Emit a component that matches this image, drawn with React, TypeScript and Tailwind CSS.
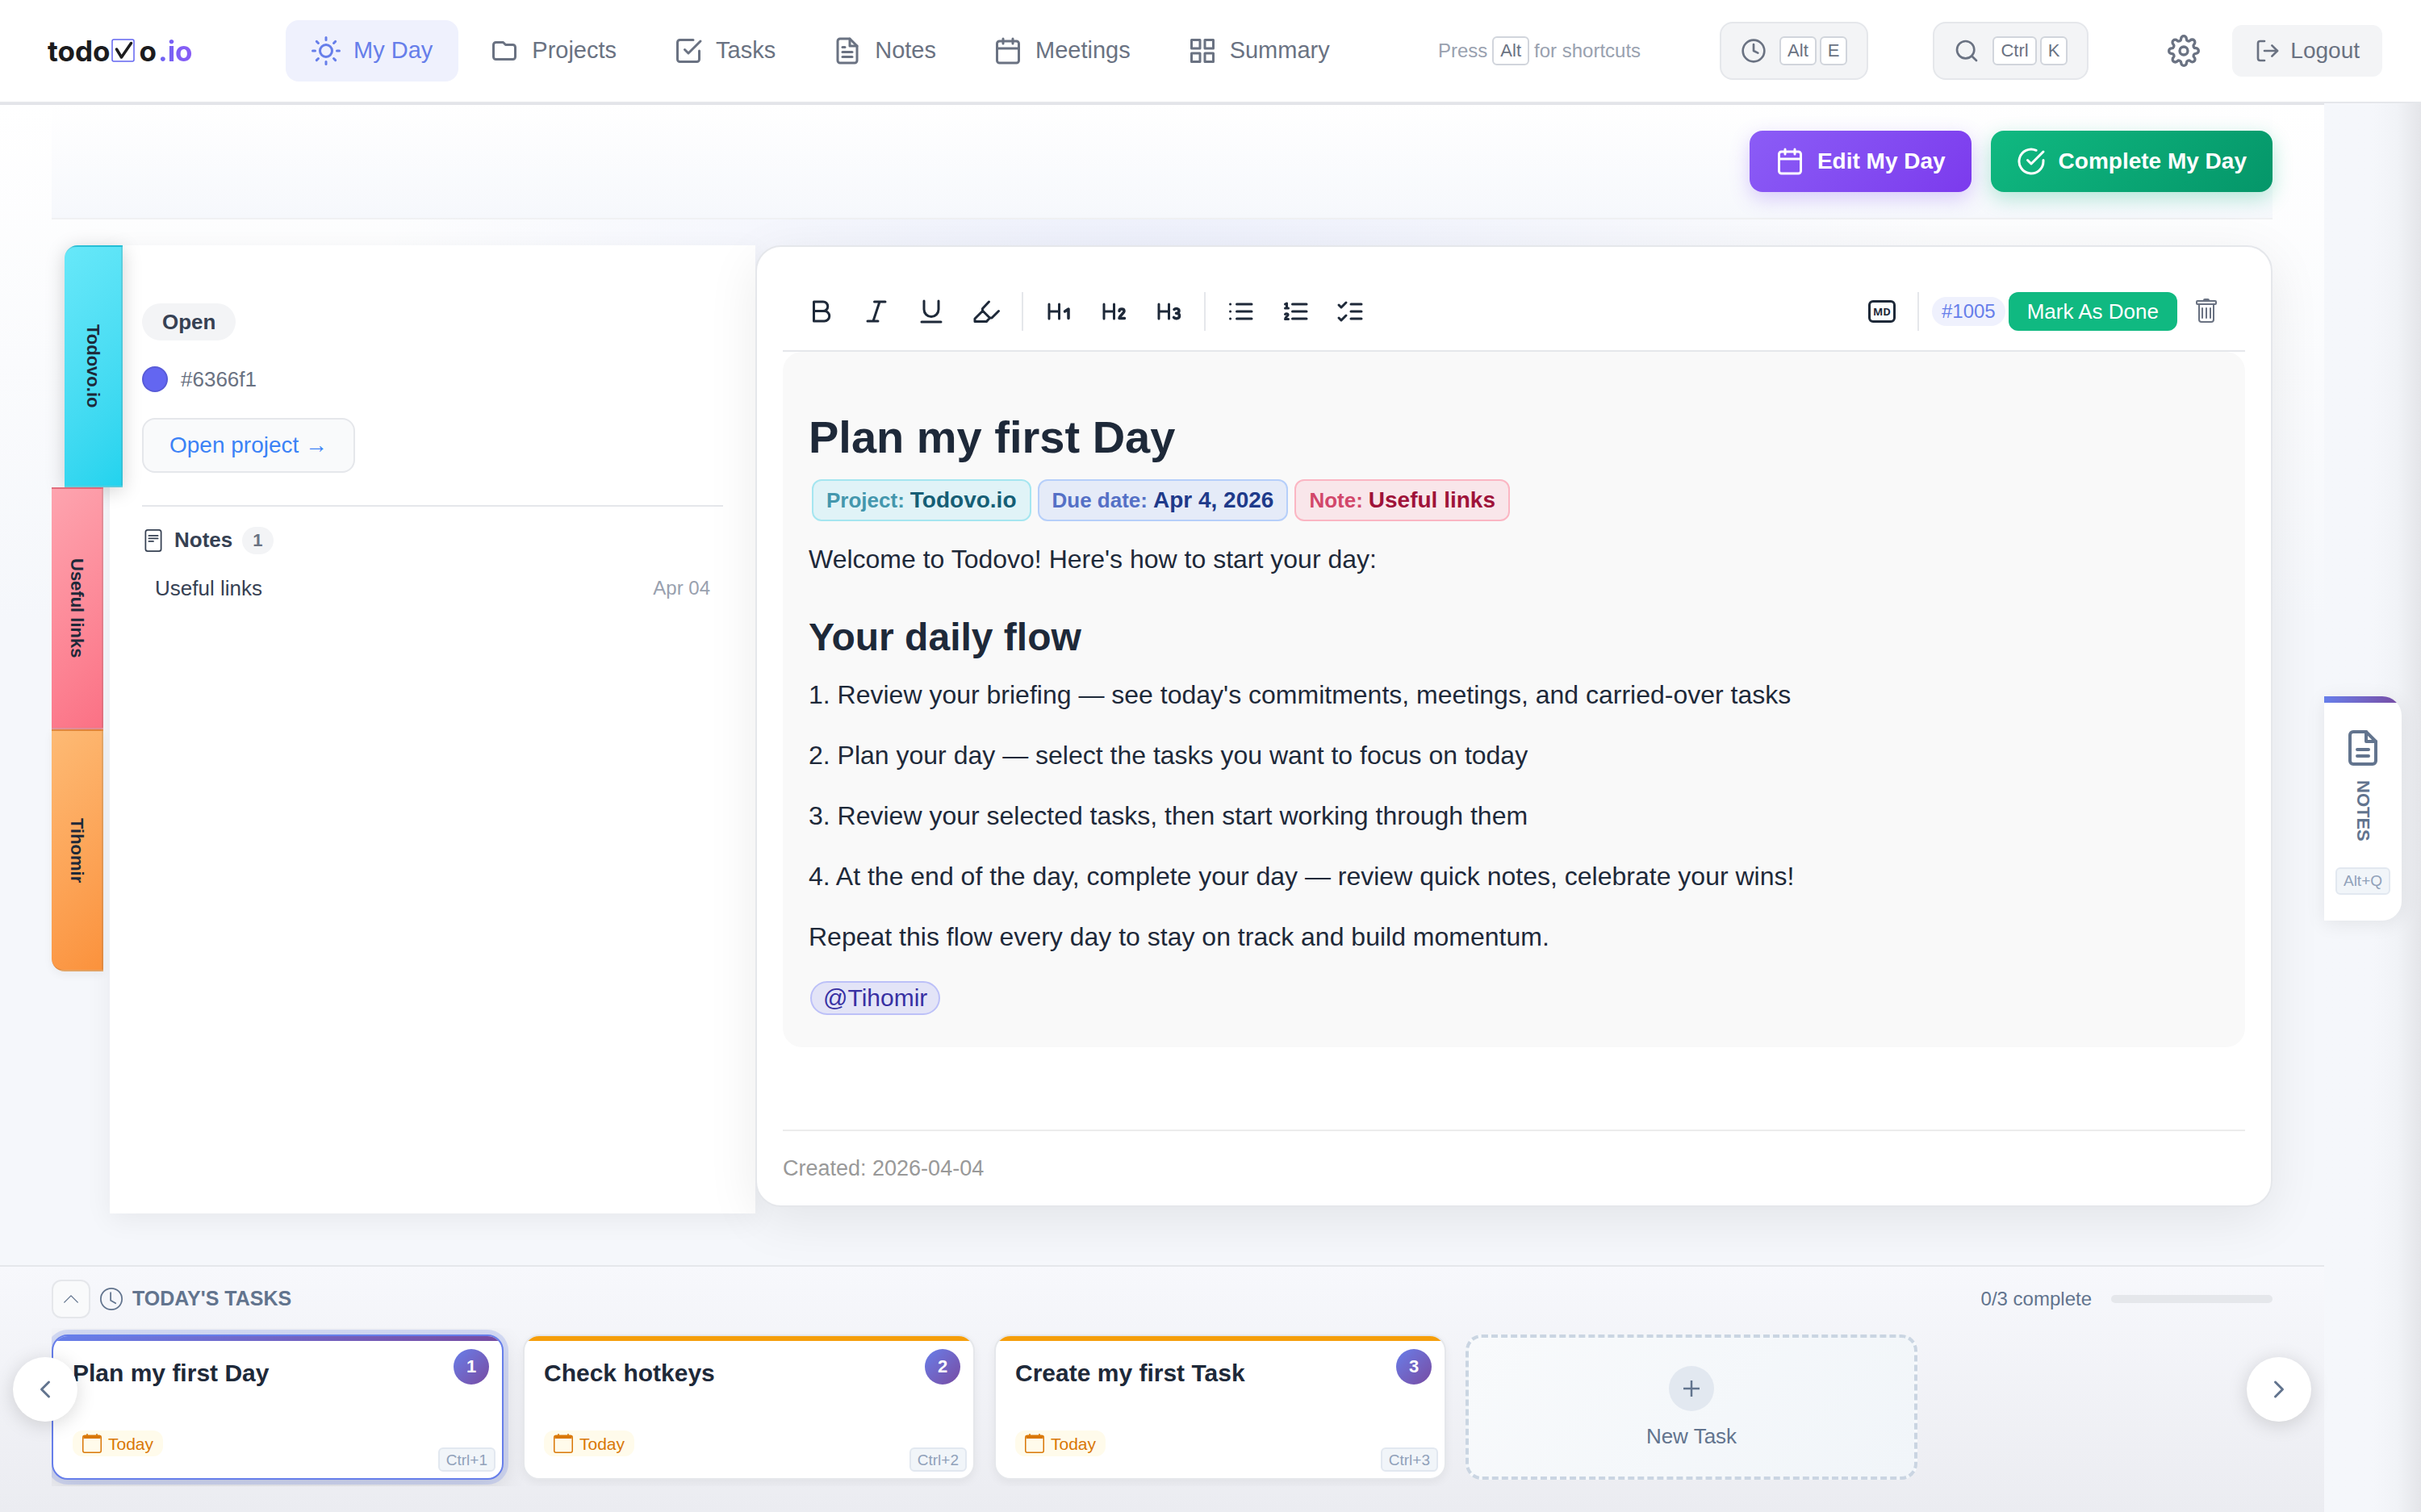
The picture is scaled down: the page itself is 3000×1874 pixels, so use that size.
import React from 'react';
import {
  FiCalendar,
  FiCheckCircle,
  FiCheckSquare,
  FiChevronLeft,
  FiChevronRight,
  FiClock,
  FiFileText,
  FiGrid,
  FiLogOut,
  FiSearch,
  FiSettings,
  FiSun,
} from 'react-icons/fi';
import { BsChevronUp, BsClock, BsTrash } from 'react-icons/bs';

type IconProps = { size?: number };

const FolderIcon: React.FC<IconProps> = ({ size = 36 }) => (
  <svg width={size} height={size} viewBox="0 0 24 24" fill="none" stroke="currentColor" strokeWidth="2" strokeLinecap="round" strokeLinejoin="round">
    <path d="M3 7v10a2 2 0 002 2h14a2 2 0 002-2V9a2 2 0 00-2-2h-6l-2-2H5a2 2 0 00-2 2z" />
  </svg>
);

const PageIcon: React.FC<IconProps> = ({ size = 28 }) => (
  <svg width={size} height={size} viewBox="0 0 16 16" fill="none" stroke="currentColor" strokeLinecap="round">
    <rect x="2.5" y="0.5" width="11" height="15" rx="1.5" />
    <path d="M4.8 4.5h6.4M4.8 6.5h6.4M4.8 8.5h3.2" />
  </svg>
);

const NoteIcon: React.FC<IconProps> = ({ size = 48 }) => (
  <svg width={size} height={size} viewBox="0 0 24 24" fill="none" stroke="currentColor" strokeWidth="2" strokeLinecap="round" strokeLinejoin="round">
    <path d="M14 2H6a2 2 0 00-2 2v16a2 2 0 002 2h12a2 2 0 002-2V8z" />
    <path d="M14 2v6h6M8.500 13h7M8.500 17h7" />
  </svg>
);

const TodayIcon: React.FC<IconProps> = ({ size = 24 }) => (
  <svg width={size} height={size} viewBox="0 0 16 16" fill="none" stroke="currentColor">
    <rect x="0.5" y="1.5" width="15" height="14" rx="1.5" />
    <path d="M4 0v2M12 0v2" />
    <path d="M1 1.500h14v2.500H1z" fill="currentColor" stroke="none" />
  </svg>
);

const ToolIcon: React.FC<{ children: React.ReactNode }> = ({ children }) => (
  <svg width="36" height="36" viewBox="0 0 36 36" fill="none" stroke="currentColor" strokeWidth="3" strokeLinecap="round" strokeLinejoin="round">
    {children}
  </svg>
);

const formatTools = [
  {
    label: 'Bold',
    icon: <path d="M8.500 6v24M8.500 6h11.500a5.700 5.700 0 010 11.500H8.500M20 17.500h1.500a6 6 0 010 12.500H8.500" />,
  },
  { label: 'Italic', icon: <path d="M15.500 6H29M7 30h13M22 6l-8 24" /> },
  { label: 'Underline', icon: <path d="M9 5v10.500a9 9 0 0018 0V5M6 31h24" /> },
  {
    label: 'Highlight',
    icon: <path d="M21.500 6l-8 8.500v3L4 27v3.500h14.500l4-4.500L14 17.500M22.500 26h2.500l8.500-8.500" />,
  },
];

const headingTools = [
  { label: 'Heading 1', level: <path d="M25.500 18l4.500-3v11.500" /> },
  { label: 'Heading 2', level: <path d="M25 17.500c0-3.500 6-3.500 6 0 0 3-6 5.500-6 9h6.500" /> },
  { label: 'Heading 3', level: <path d="M25 15.500c2-2 6-1 6 1.800 0 2-1.500 3-3.500 3 2.500 0 4 1.200 4 3.200 0 3.500-5 4.200-7 1.800" /> },
];

const listTools = [
  { label: 'Bullet list', icon: <path d="M12.500 9H31M12.500 18H31M12.500 27H31M4.500 9h.1M4.500 18h.1M4.500 27h.1" /> },
  {
    label: 'Numbered list',
    icon: (
      <>
        <path d="M13.500 9H31M13.500 18H31M13.500 27H31" />
        <path d="M4.500 9l2-1v6M4.500 14h4M4.500 21.500c1.500-1.500 4-.5 3.500 1.200-.4 1.300-3.500 2.300-3.500 4.800h4" />
      </>
    ),
  },
  { label: 'Task list', icon: <path d="M18 9h13M18 18h13M18 27h13M3 10l3 3 6-6M3 26l3 3 6-6" /> },
];

const navItems = [
  { label: 'My Day', icon: <FiSun size={36} />, active: true },
  { label: 'Projects', icon: <FolderIcon /> },
  { label: 'Tasks', icon: <FiCheckSquare size={36} /> },
  { label: 'Notes', icon: <FiFileText size={36} /> },
  { label: 'Meetings', icon: <FiCalendar size={36} /> },
  { label: 'Summary', icon: <FiGrid size={36} /> },
];

const steps = [
  "1. Review your briefing — see today's commitments, meetings, and carried-over tasks",
  '2. Plan your day — select the tasks you want to focus on today',
  '3. Review your selected tasks, then start working through them',
  '4. At the end of the day, complete your day — review quick notes, celebrate your wins!',
  'Repeat this flow every day to stay on track and build momentum.',
];

const chips = [
  { label: 'Project:', value: 'Todovo.io', box: 'border-[#a5e6f0] bg-[#e0f3f7]', labelColor: 'text-[#4497ad]', valueColor: 'text-[#155e75]' },
  { label: 'Due date:', value: 'Apr 4, 2026', box: 'border-[#b6cffa] bg-[#e5ebf8]', labelColor: 'text-[#5470c6]', valueColor: 'text-[#1e3a8a]' },
  { label: 'Note:', value: 'Useful links', box: 'border-[#fbb6c3] bg-[#f9e6ea]', labelColor: 'text-[#d2476b]', valueColor: 'text-[#9f1239]' },
];

const tasks = ['Plan my first Day', 'Check hotkeys', 'Create my first Task'];

const Kbd: React.FC<{ children: React.ReactNode }> = ({ children }) => (
  <kbd className="inline-flex h-9 items-center rounded-md border-2 border-gray-300 bg-white px-2 font-['Liberation_Sans',Arial,sans-serif] text-[22px] leading-none text-gray-500">
    {children}
  </kbd>
);

const KeyHint: React.FC<{ children: React.ReactNode; tall?: boolean }> = ({ children, tall }) => (
  <kbd
    className={`inline-flex items-center justify-center rounded-md border-2 border-slate-200 bg-slate-100 px-2 font-['Liberation_Sans',Arial,sans-serif] text-[19px] leading-none text-slate-400 ${tall ? 'h-[34px]' : 'h-[30px]'}`}
  >
    {children}
  </kbd>
);

const Divider = () => <div className="mx-2 h-12 w-0.5 bg-gray-200" />;

const ToolButton: React.FC<{ label: string; children: React.ReactNode }> = ({ label, children }) => (
  <button type="button" aria-label={label} className="flex size-16 items-center justify-center rounded-xl text-gray-800">
    {children}
  </button>
);

const Logo = () => (
  <a href="#" className="flex w-[295px] items-center font-['Inter',sans-serif] text-[35px] leading-none font-bold text-[#1c1c1e]">
    todo
    <svg width="30" height="30" viewBox="0 0 30 30" fill="none" className="mr-1 ml-0.5">
      <rect x="1" y="1" width="27" height="27" rx="2" stroke="#6366f1" strokeWidth="1.5" />
      <path d="M6.500 13l6 10L24.500 5.500" stroke="#1c1c1e" strokeWidth="3.5" strokeLinecap="round" strokeLinejoin="round" />
    </svg>
    o
    <span className="ml-0.5 bg-linear-to-r from-[#6d63f3] to-[#8b5cf6] bg-clip-text text-transparent">.io</span>
  </a>
);

const Header = () => (
  <header className="flex h-32 items-center border-b-2 border-gray-200 bg-white pr-12 pl-[59px]">
    <Logo />
    <nav className="flex flex-1 gap-[7px]">
      {navItems.map((item) => (
        <a
          key={item.label}
          href="#"
          className={
            item.active
              ? 'flex h-19 items-center gap-4 rounded-2xl bg-[#eff1fd] px-8 text-[29px] text-[#667eea]'
              : 'flex h-19 items-center gap-4 rounded-2xl px-8 text-[29px] text-gray-500'
          }
        >
          {item.icon}
          {item.label}
        </a>
      ))}
    </nav>
    <p className="mr-[98px] flex items-center gap-1.5 text-2xl whitespace-nowrap text-gray-400">
      Press <Kbd>Alt</Kbd> for shortcuts
    </p>
    <button type="button" aria-label="Time tracker" className="mr-20 flex h-18 items-center gap-1 rounded-2xl border-2 border-gray-200 bg-gray-100 px-6 text-gray-500">
      <FiClock size={32} className="mr-3" />
      <Kbd>Alt</Kbd>
      <Kbd>E</Kbd>
    </button>
    <button type="button" aria-label="Search" className="mr-20 flex h-18 items-center gap-1 rounded-2xl border-2 border-gray-200 bg-gray-100 px-6 text-gray-500">
      <FiSearch size={32} className="mr-3" />
      <Kbd>Ctrl</Kbd>
      <Kbd>K</Kbd>
    </button>
    <button type="button" aria-label="Settings" className="mr-[22px] flex size-19 items-center justify-center text-gray-500">
      <FiSettings size={40} />
    </button>
    <button type="button" className="flex h-16 items-center gap-3 rounded-xl bg-gray-100 px-7 text-[28px] text-gray-500">
      <FiLogOut size={32} />
      Logout
    </button>
  </header>
);

const DayActions = () => (
  <div className="mx-16 flex justify-end gap-6 border-b-2 border-[#f0f1f3] bg-linear-to-b from-white to-[#f6f8fc] py-8">
    <button
      type="button"
      className="flex h-19 items-center gap-4 rounded-2xl bg-linear-135 from-[#8b5cf6] to-[#7c3aed] px-8 text-[28px] font-bold text-white shadow-[0_8px_24px_rgba(139,92,246,0.3)]"
    >
      <FiCalendar size={36} />
      Edit My Day
    </button>
    <button
      type="button"
      className="flex h-19 items-center gap-4 rounded-2xl bg-linear-135 from-[#10b981] to-[#059669] px-8 text-[28px] font-bold text-white shadow-[0_8px_24px_rgba(16,185,129,0.3)]"
    >
      <FiCheckCircle size={36} />
      Complete My Day
    </button>
  </div>
);

const SideTabs = () => (
  <div className="flex w-18 flex-col items-start text-[22px] font-bold text-gray-800">
    <button
      type="button"
      className="z-10 ml-4 flex h-[300px] w-18 items-center justify-center rounded-tl-2xl border-y-2 border-r-2 border-black/10 bg-linear-135 from-[#67e8f9] to-[#22d3ee] shadow-[0_4px_24px_rgba(0,0,0,0.18)]"
    >
      <span className="[writing-mode:vertical-rl]">Todovo.io</span>
    </button>
    <button
      type="button"
      className="z-20 flex h-[300px] w-16 items-center justify-center border-y-2 border-r-2 border-black/10 bg-linear-135 from-[#fda4af] to-[#fb7185]"
    >
      <span className="[writing-mode:vertical-rl]">Useful links</span>
    </button>
    <button
      type="button"
      className="z-20 flex h-[300px] w-16 items-center justify-center rounded-bl-2xl border-y-2 border-r-2 border-black/10 bg-linear-135 from-[#fdba74] to-[#fb923c] shadow-[0_4px_12px_rgba(0,0,0,0.05)]"
    >
      <span className="[writing-mode:vertical-rl]">Tihomir</span>
    </button>
  </div>
);

const ProjectPanel = () => (
  <aside className="w-[800px] bg-white px-10 pt-18 shadow-[0_8px_32px_rgba(0,0,0,0.06)]">
    <span className="inline-flex h-[46px] items-center rounded-full bg-gray-100 px-[25px] text-[26px] font-bold text-gray-700">Open</span>
    <div className="mt-6 flex h-12 items-center gap-4 text-[26px] text-gray-500">
      <span className="size-8 rounded-full border-2 border-black/10 bg-[#6366f1]" />
      #6366f1
    </div>
    <a href="#" className="mt-6 inline-flex h-17 items-center rounded-2xl border-2 border-gray-200 bg-gray-50 px-8 text-[28px] text-[#3b82f6]">
      Open project →
    </a>
    <section className="mt-10 border-t-2 border-gray-200 pt-[22px]">
      <h3 className="flex items-center gap-3 text-[26px] font-bold text-gray-700">
        <PageIcon />
        Notes
        <span className="flex h-[34px] items-center rounded-full bg-gray-100 px-[13px] text-[22px] leading-none text-gray-500">1</span>
      </h3>
      <a href="#" className="mt-3 flex h-14 items-center justify-between px-4 text-[26px] text-gray-700">
        Useful links
        <time className="text-2xl text-gray-400">Apr 04</time>
      </a>
    </section>
  </aside>
);

const EditorToolbar = () => (
  <div className="flex items-center gap-1 border-b-2 border-gray-200 p-4">
    {formatTools.map((tool) => (
      <ToolButton key={tool.label} label={tool.label}>
        <ToolIcon>{tool.icon}</ToolIcon>
      </ToolButton>
    ))}
    <Divider />
    {headingTools.map((tool) => (
      <ToolButton key={tool.label} label={tool.label}>
        <ToolIcon>
          <path d="M6 9v18M18.500 9v18M6 18h12.500" />
          <g strokeWidth="3.5">{tool.level}</g>
        </ToolIcon>
      </ToolButton>
    ))}
    <Divider />
    {listTools.map((tool) => (
      <ToolButton key={tool.label} label={tool.label}>
        <ToolIcon>{tool.icon}</ToolIcon>
      </ToolButton>
    ))}
    <div className="flex-1" />
    <ToolButton label="Markdown">
      <span className="flex h-7 w-[34px] items-center justify-center rounded-md border-3 border-gray-800 font-['Open_Sans',sans-serif] text-[13px] leading-none font-bold">
        MD
      </span>
    </ToolButton>
    <Divider />
    <span className="ml-1 flex h-9 items-center rounded-full bg-[#eff1fd] px-3 text-2xl text-[#667eea]">#1005</span>
    <button type="button" className="h-12 rounded-xl bg-[#10b981] px-[23px] text-[26px] text-white">
      Mark As Done
    </button>
    <button type="button" aria-label="Delete" className="flex size-16 items-center justify-center text-gray-500">
      <BsTrash size={32} />
    </button>
  </div>
);

const Editor = () => (
  <article className="z-10 mb-2 flex min-w-0 flex-1 flex-col rounded-4xl border-2 border-gray-200 bg-white p-8 shadow-[0_16px_64px_rgba(0,0,0,0.08)]">
    <EditorToolbar />
    <div className="rounded-3xl bg-[#f9f9f9] px-8 pt-18 pb-9 text-[32px] leading-[48px] text-gray-800">
      <h1 className="text-[56px] leading-[68px] font-bold">Plan my first Day</h1>
      <div className="mx-1 mt-[18px] flex gap-2">
        {chips.map((chip) => (
          <span key={chip.label} className={`flex h-13 items-center gap-[7px] rounded-xl border-2 px-4 text-[28px] font-bold ${chip.box}`}>
            <span className={`text-[26px] ${chip.labelColor}`}>{chip.label}</span>
            <span className={chip.valueColor}>{chip.value}</span>
          </span>
        ))}
      </div>
      <p className="mt-[23px]">Welcome to Todovo! Here's how to start your day:</p>
      <h2 className="mt-11 mb-[18px] text-[48px] leading-[58px] font-bold">Your daily flow</h2>
      <div className="flex flex-col items-start gap-[27px]">
        {steps.map((step) => (
          <p key={step}>{step}</p>
        ))}
        <a href="#" className="mx-0.5 my-1 flex h-[42px] items-center rounded-full border-2 border-[#bcc0f8] bg-[#e3e4f7] px-3.5 text-[30px] text-[#3730a3]">
          @Tihomir
        </a>
      </div>
    </div>
    <footer className="mt-auto border-t-2 border-[#ececec] pt-8 text-[27px] leading-7 text-[#999999]">Created: 2026-04-04</footer>
  </article>
);

const TaskCard: React.FC<{ title: string; index: number; active: boolean }> = ({ title, index, active }) => (
  <article
    className={
      active
        ? 'relative h-45 w-[560px] rounded-[20px] border-2 border-[#667eea] bg-white shadow-[0_0_0_6px_rgba(102,126,234,0.22),0_8px_32px_rgba(0,0,0,0.12)]'
        : 'relative h-45 w-[560px] rounded-[20px] border-2 border-gray-200 bg-white shadow-[0_4px_12px_rgba(0,0,0,0.05)]'
    }
  >
    <div className="flex h-full flex-col overflow-hidden rounded-[18px]">
      <div className={active ? 'h-1.5 shrink-0 bg-linear-to-r from-[#667eea] to-[#764ba2]' : 'h-1.5 shrink-0 bg-[#f59e0b]'} />
      <h3 className="px-6 pt-[22px] text-[30px] leading-9 font-bold text-gray-800">{title}</h3>
      <span className="mt-auto mb-[27px] ml-6 flex h-8 items-center gap-2 self-start rounded-xl bg-[#fffbeb] px-3 text-[21px] leading-none text-[#d97706]">
        <TodayIcon />
        Today
      </span>
    </div>
    <span className="absolute top-4 right-4 flex size-11 items-center justify-center rounded-full bg-linear-135 from-[#667eea] to-[#764ba2] text-[22px] leading-none font-bold text-white">
      {index}
    </span>
    <span className="absolute right-2 bottom-2 flex">
      <KeyHint>Ctrl+{index}</KeyHint>
    </span>
  </article>
);

const TaskBar = () => (
  <section className="relative border-t-2 border-gray-200 bg-linear-to-b from-[#f7f8fc] to-[#ebecf1] px-16 pt-4 pb-8">
    <div className="flex h-12 items-center">
      <button type="button" aria-label="Collapse" className="flex size-12 items-center justify-center rounded-xl border-2 border-gray-200 bg-gray-50 text-slate-500">
        <BsChevronUp size={22} />
      </button>
      <h2 className="ml-3 flex items-center gap-3 text-[25px] font-bold text-slate-500">
        <BsClock size={28} />
        TODAY'S TASKS
      </h2>
      <label htmlFor="day-progress" className="mr-6 ml-auto text-2xl text-slate-500">
        0/3 complete
      </label>
      <div id="day-progress" role="progressbar" aria-valuenow={0} aria-valuemax={3} className="h-2.5 w-50 rounded-full bg-gray-200" />
    </div>
    <div className="mt-3 flex gap-6 overflow-hidden py-2">
      {tasks.map((task, i) => (
        <TaskCard key={task} title={task} index={i + 1} active={i === 0} />
      ))}
      <button
        type="button"
        className="flex h-45 w-[560px] flex-col items-center justify-center gap-3 rounded-[20px] border-4 border-dashed border-slate-300 bg-linear-135 from-slate-50 to-slate-100 pt-1 text-[26px] text-slate-500"
      >
        <span className="flex size-14 items-center justify-center rounded-full bg-slate-200">
          <svg width="20" height="20" viewBox="0 0 20 20" stroke="currentColor" strokeWidth="2.5">
            <path d="M10 0v20M0 10h20" />
          </svg>
        </span>
        New Task
      </button>
    </div>
    <button
      type="button"
      aria-label="Previous"
      className="absolute bottom-28 left-4 flex size-20 items-center justify-center rounded-full bg-white text-slate-500 shadow-[0_4px_24px_rgba(0,0,0,0.15)]"
    >
      <FiChevronLeft size={36} />
    </button>
    <button
      type="button"
      aria-label="Next"
      className="absolute right-4 bottom-28 flex size-20 items-center justify-center rounded-full bg-white text-slate-500 shadow-[0_4px_24px_rgba(0,0,0,0.15)]"
    >
      <FiChevronRight size={36} />
    </button>
  </section>
);

const NotesRail = () => (
  <aside className="flex w-30 flex-col bg-linear-to-r from-[#f5f7fb] from-50% via-[#f1f3f7] via-75% to-[#e4e5e9] pt-[735px]">
    <button
      type="button"
      className="flex w-24 flex-col items-center overflow-hidden rounded-r-3xl bg-white pb-8 text-slate-500 shadow-[0_4px_24px_rgba(0,0,0,0.08)]"
    >
      <span className="mb-8 h-2 w-full bg-linear-to-r from-[#667eea] to-[#764ba2]" />
      <NoteIcon />
      <span className="mt-4 mb-8 text-[22px] leading-6 font-bold [writing-mode:vertical-rl]">NOTES</span>
      <KeyHint tall>Alt+Q</KeyHint>
    </button>
  </aside>
);

const App: React.FC = () => {
  return (
    <div className="flex min-h-screen flex-col bg-[#f5f7fb] font-['Liberation_Sans',Arial,sans-serif]">
      <Header />
      <div className="flex flex-1">
        <main className="flex min-w-0 flex-1 flex-col border-t-2 border-[#e2e3e8] bg-[radial-gradient(ellipse_980px_480px_at_50%_240px,rgba(102,126,234,0.11),transparent),linear-gradient(to_bottom,#ffffff,#f5f7fb_640px)]">
          <DayActions />
          <div className="flex flex-1 px-16 pt-8 pb-16">
            <SideTabs />
            <ProjectPanel />
            <Editor />
          </div>
          <TaskBar />
        </main>
        <NotesRail />
      </div>
    </div>
  );
};

export default App;
